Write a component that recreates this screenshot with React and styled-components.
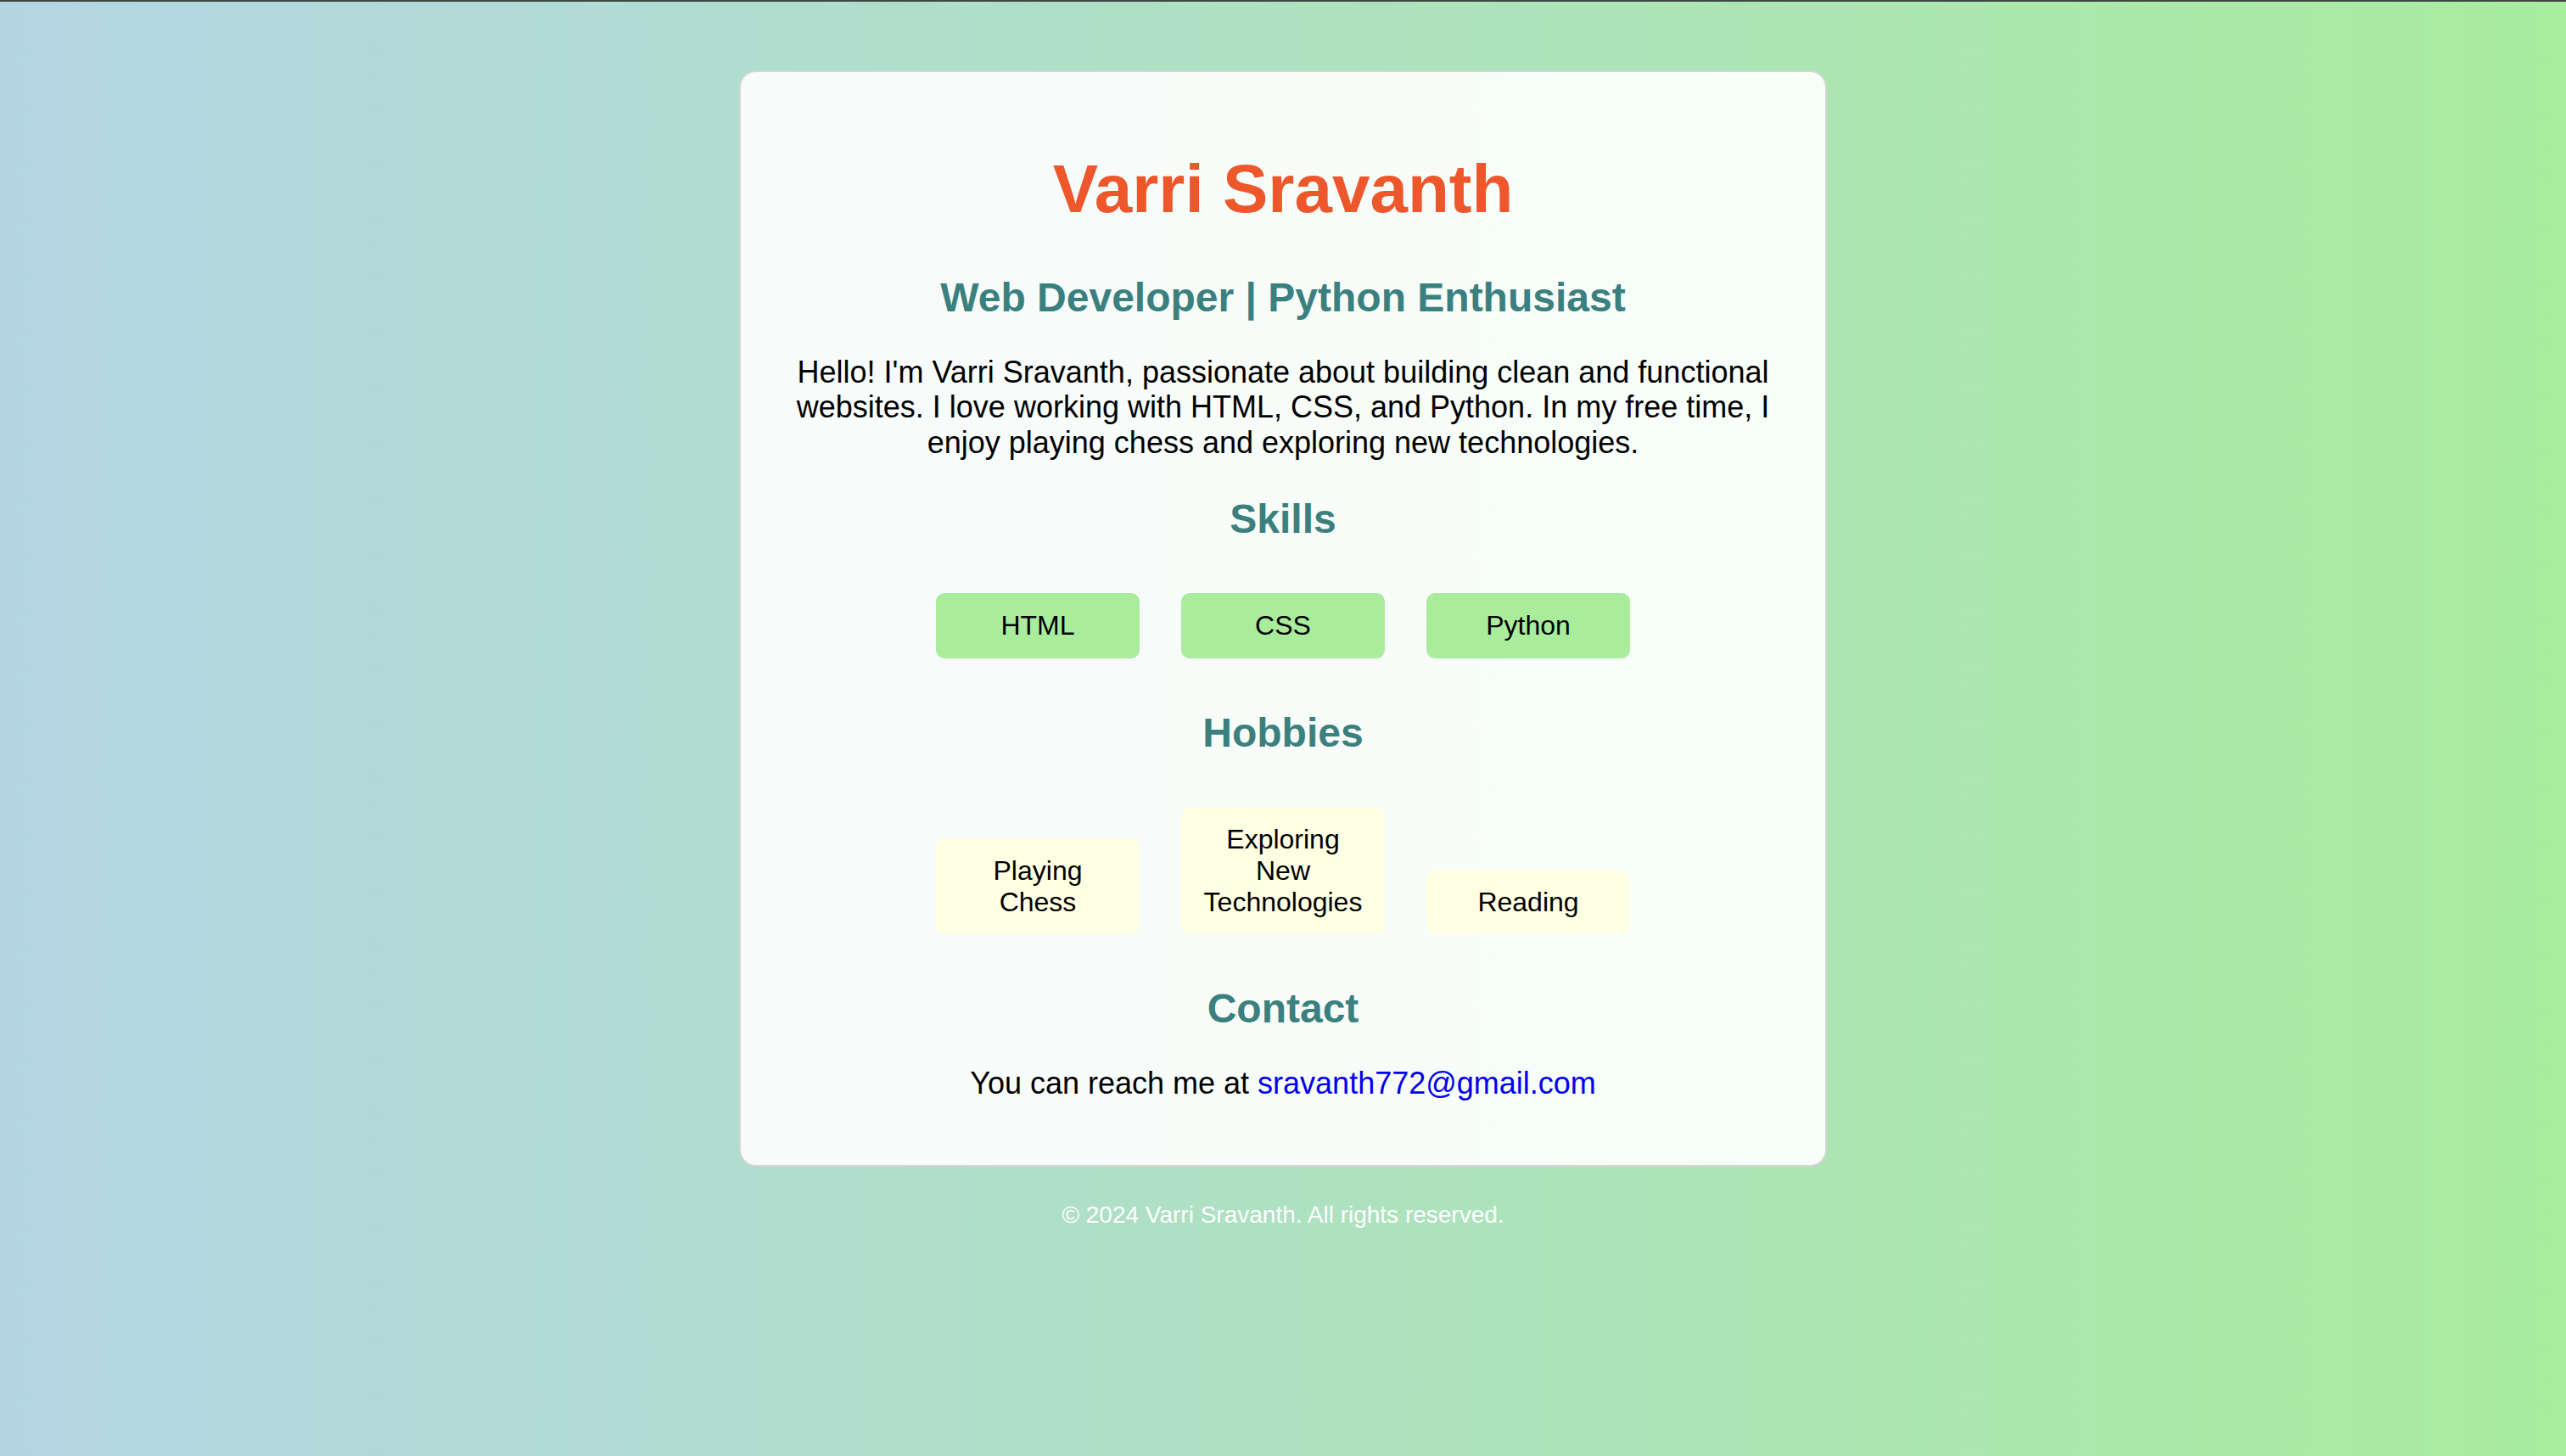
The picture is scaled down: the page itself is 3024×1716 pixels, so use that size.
import React from "react";
import styled, { createGlobalStyle } from "styled-components";

const GlobalStyle = createGlobalStyle`
  html {
    min-height: 100%;
    background: linear-gradient(to right, #b4d6e4 0%, #a8ec9e 100%);
  }
  body {
    margin: 0;
    border-top: 2px solid #3e4642;
    font-family: "Liberation Sans", Arial, Helvetica, sans-serif;
    color: #000;
  }
`;

const Page = styled.div`
  display: flex;
  flex-direction: column;
  align-items: center;
  padding-top: 81px;
  padding-bottom: 80px;
`;

const Card = styled.main`
  box-sizing: border-box;
  width: 1282px;
  padding: 40px;
  border: 2px solid #d3d6d4;
  border-radius: 20px;
  background: rgba(255, 255, 255, 0.9);
  display: flex;
  flex-direction: column;
  align-items: center;
  text-align: center;
`;

const Title = styled.h1`
  margin: 52px 0 0;
  font-size: 80px;
  line-height: 92px;
  font-weight: 700;
  color: #ed572b;
`;

const Heading = styled.h2`
  margin: ${(p) => p.$top}px 0 0;
  font-size: 48px;
  line-height: 55px;
  font-weight: 700;
  color: #3a807e;
`;

const Text = styled.p`
  margin: ${(p) => p.$top}px 0 ${(p) => p.$bottom || 0}px;
  width: 100%;
  font-size: 36px;
  line-height: 41.4px;
`;

const Link = styled.a`
  color: #0000ee;
  text-decoration: none;
`;

const Row = styled.div`
  margin-top: 60px;
  display: flex;
  justify-content: center;
  align-items: flex-end;
  gap: 49px;
`;

const Tag = styled.div`
  box-sizing: border-box;
  width: 240px;
  padding: 20px;
  border-radius: 10px;
  font-size: 32px;
  line-height: 36.8px;
  text-align: center;
  background: ${(p) => (p.$kind === "hobby" ? "#ffffe3" : "#a9ec9c")};
`;

const Footer = styled.footer`
  margin-top: 41px;
  font-size: 28px;
  line-height: 32px;
  color: #ffffff;
  text-align: center;
`;

const skills = ["HTML", "CSS", "Python"];
const hobbies = ["Playing Chess", "Exploring New Technologies", "Reading"];

export default function App() {
  return (
    <>
      <GlobalStyle />
      <Page>
        <Card>
          <Title>Varri Sravanth</Title>
          <Heading $top={54}>Web Developer | Python Enthusiast</Heading>
          <Text $top={40}>
            Hello! I'm Varri Sravanth, passionate about building clean and
            functional websites. I love working with HTML, CSS, and Python. In
            my free time, I enjoy playing chess and exploring new technologies.
          </Text>
          <Heading $top={42}>Skills</Heading>
          <Row>
            {skills.map((s) => (
              <Tag key={s} $kind="skill">
                {s}
              </Tag>
            ))}
          </Row>
          <Heading $top={60}>Hobbies</Heading>
          <Row>
            {hobbies.map((h) => (
              <Tag key={h} $kind="hobby">
                {h}
              </Tag>
            ))}
          </Row>
          <Heading $top={60}>Contact</Heading>
          <Text $top={40} $bottom={35}>
            You can reach me at{" "}
            <Link href="mailto:sravanth772@gmail.com">sravanth772@gmail.com</Link>
          </Text>
        </Card>
        <Footer>© 2024 Varri Sravanth. All rights reserved.</Footer>
      </Page>
    </>
  );
}
